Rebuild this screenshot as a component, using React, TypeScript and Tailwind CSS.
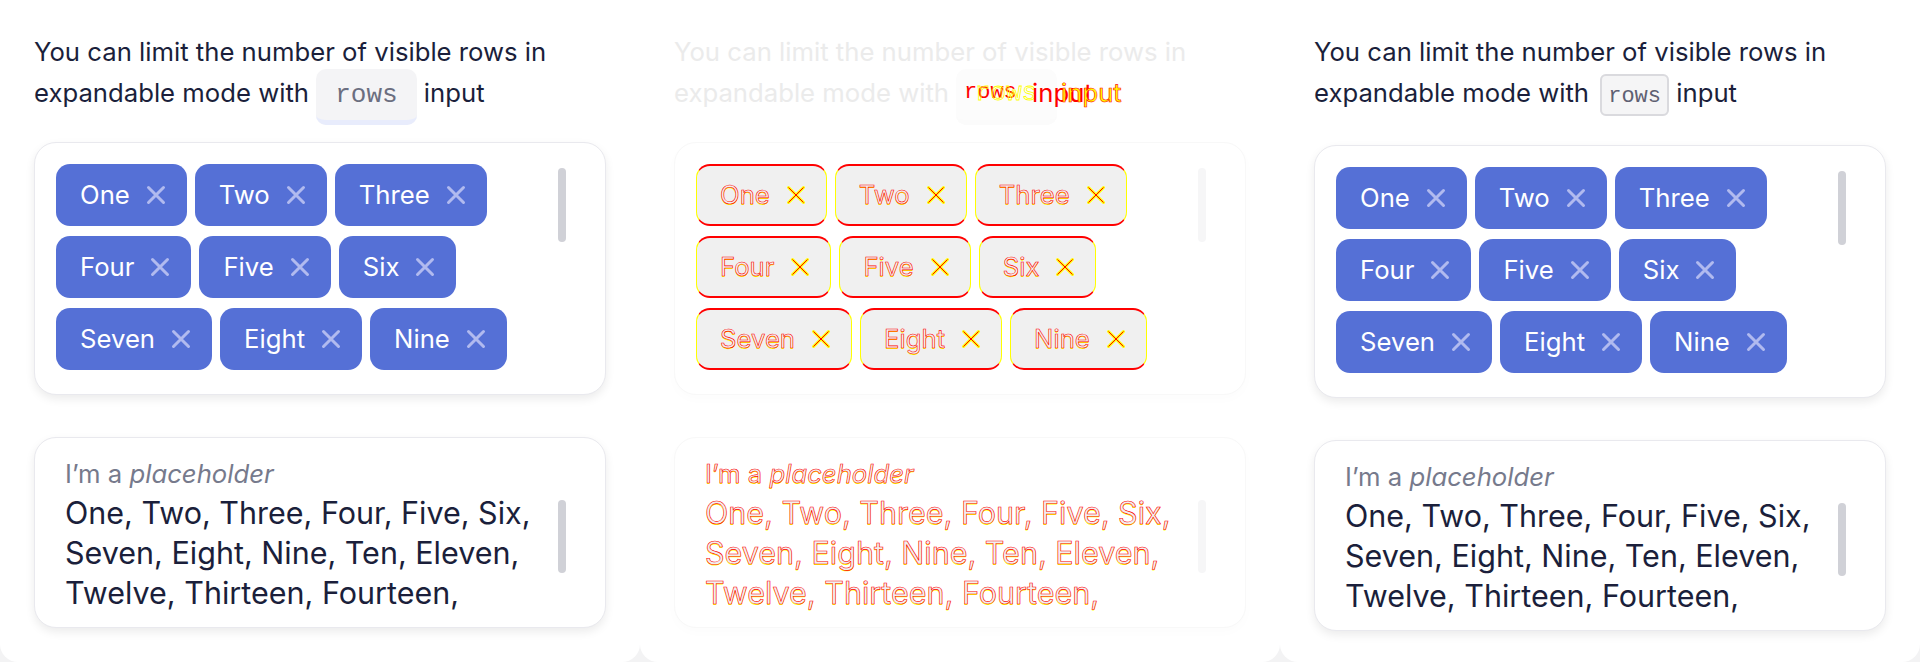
import { Fragment } from "react";

type Variant = "expected" | "diff" | "actual";

const chips = ["One", "Two", "Three", "Four", "Five", "Six", "Seven", "Eight", "Nine"];

const longText = "One, Two, Three, Four, Five, Six, Seven, Eight, Nine, Ten, Eleven, Twelve, Thirteen, Fourteen,";

// outlined look of the diff panel
const diffText = "text-[#f0f0f0] [-webkit-text-stroke:0.6px_#ff0000] [text-shadow:0_1px_0_#ffff00]";

const CrossIcon = ({ diff }: { diff: boolean }) => (
  <svg width="20" height="20" viewBox="0 0 20 20" fill="none" className="shrink-0">
    <path
      d="M2.5 2.5L17.5 17.5M17.5 2.5L2.5 17.5"
      stroke={diff ? "#ffff00" : "#b1baef"}
      strokeWidth="3"
      strokeLinecap="round"
    />
    {diff && <path d="M2.5 2.5L17.5 17.5M17.5 2.5L2.5 17.5" stroke="#ff0000" strokeWidth="1" />}
  </svg>
);

const Chip = ({ label, variant }: { label: string; variant: Variant }) => {
  const diff = variant === "diff";
  return (
    <div
      className={
        diff
          ? "flex items-center gap-[16px] h-[62px] pl-[23px] pr-[20px] rounded-[14px] bg-[#f0f0f0] border border-x-[#ffff00] border-y-2 border-y-[#ff0000]"
          : "flex items-center gap-[16px] h-[62px] pl-[24px] pr-[21px] rounded-[14px] bg-[#5570d6] text-white"
      }
    >
      <span className={diff ? diffText : ""}>{label}</span>
      <CrossIcon diff={diff} />
    </div>
  );
};

const CodePill = ({ variant }: { variant: Variant }) => {
  if (variant === "actual") {
    return (
      <span className="ml-[4px] rounded-[6px] border-2 border-[#dadade] bg-[#f5f5f6] px-[6px] pt-[8px] pb-[5px] font-['Liberation_Mono',monospace] text-[22px] text-[#5e6072]">
        rows
      </span>
    );
  }
  return (
    <span
      className={
        variant === "diff"
          ? "rounded-[10px] bg-[#fcfcfc] border-b-[5px] border-[#fbfbfb] px-[19px] pt-[11px] pb-[10px] font-['Liberation_Mono',monospace] text-[26px] text-transparent"
          : "rounded-[10px] bg-[#f4f4f6] border-b-[5px] border-[#e8ecfc] px-[19px] pt-[11px] pb-[10px] font-['Liberation_Mono',monospace] text-[26px] text-[#6b6e80]"
      }
    >
      rows
    </span>
  );
};

const Panel = ({ variant }: { variant: Variant }) => {
  const diff = variant === "diff";
  const cardClass = diff
    ? "rounded-[22px] border border-[#f8f8f8] bg-white shadow-[0_4px_12px_rgba(0,0,0,0.015)]"
    : "rounded-[22px] border border-[#e9e9ee] bg-white shadow-[0_4px_10px_rgba(0,0,0,0.08)]";
  const barClass = diff ? "bg-[#f6f6f7]" : "bg-[#d0d1d7]";

  return (
    <div className="w-[640px] h-[662px] shrink-0 bg-white rounded-b-[18px] px-[34px] pt-[32px]">
      {/* heading */}
      <div className="relative text-[25.7px] leading-[40.5px]">
        <p className={diff ? "text-[#ebebeb]" : "text-[#1b1f3b]"}>
          You can limit the number of visible rows in expandable mode with <CodePill variant={variant} />{" "}
          <span className={diff ? "text-transparent" : ""}>input</span>
        </p>
        {diff && (
          <Fragment>
            <span className="absolute left-[290px] top-[40.5px] font-['Liberation_Mono',monospace] text-[22px] text-[#ff0000]">
              rows
            </span>
            <span className="absolute left-[301px] top-[40.5px] font-['Liberation_Mono',monospace] text-[26px] text-transparent [-webkit-text-stroke:0.8px_#ffff00]">
              rows
            </span>
            <span className="absolute left-[358px] top-[40.5px] text-[#ff0000]">input</span>
            <span className="absolute left-[387px] top-[40.5px] text-[#ffff00] [-webkit-text-stroke:0.6px_#ff0000]">input</span>
          </Fragment>
        )}
      </div>

      {/* chips */}
      <div className={`${variant === "actual" ? "mt-[28px]" : "mt-[27px]"} ${cardClass} flex pl-[21px] pr-[39px] pt-[21px] pb-[24px]`}>
        <div className="flex-1 flex flex-wrap content-start gap-x-[8px] gap-y-[10px] h-[206px] text-[25.7px]">
          {chips.map((chip) => (
            <Chip key={chip} label={chip} variant={variant} />
          ))}
        </div>
        <div className={`w-[8px] h-[74px] mt-[4px] rounded-full shrink-0 ${barClass}`} />
      </div>

      {/* textarea */}
      <div className={`mt-[42px] ${cardClass} flex pl-[30px] pr-[39px] pt-[20px] pb-[12px]`}>
        <div className="flex-1">
          <div className={`text-[25.7px] leading-[32px] ${diff ? diffText : "text-[#767a8c]"}`}>
            I’m a <i>placeholder</i>
          </div>
          <div className={`mt-[3px] h-[121.5px] text-[30.5px] leading-[40px] ${diff ? diffText : "text-[#1b1f3b]"}`}>
            {longText}
          </div>
        </div>
        <div className={`w-[8px] h-[73px] mt-[42px] rounded-full shrink-0 ${barClass}`} />
      </div>
    </div>
  );
};

const App = () => {
  return (
    <div className="flex w-[1920px] h-[662px] bg-[#f3f3f4] font-['Inter',sans-serif] overflow-hidden">
      <Panel variant="expected" />
      <Panel variant="diff" />
      <Panel variant="actual" />
    </div>
  );
};

export default App;
